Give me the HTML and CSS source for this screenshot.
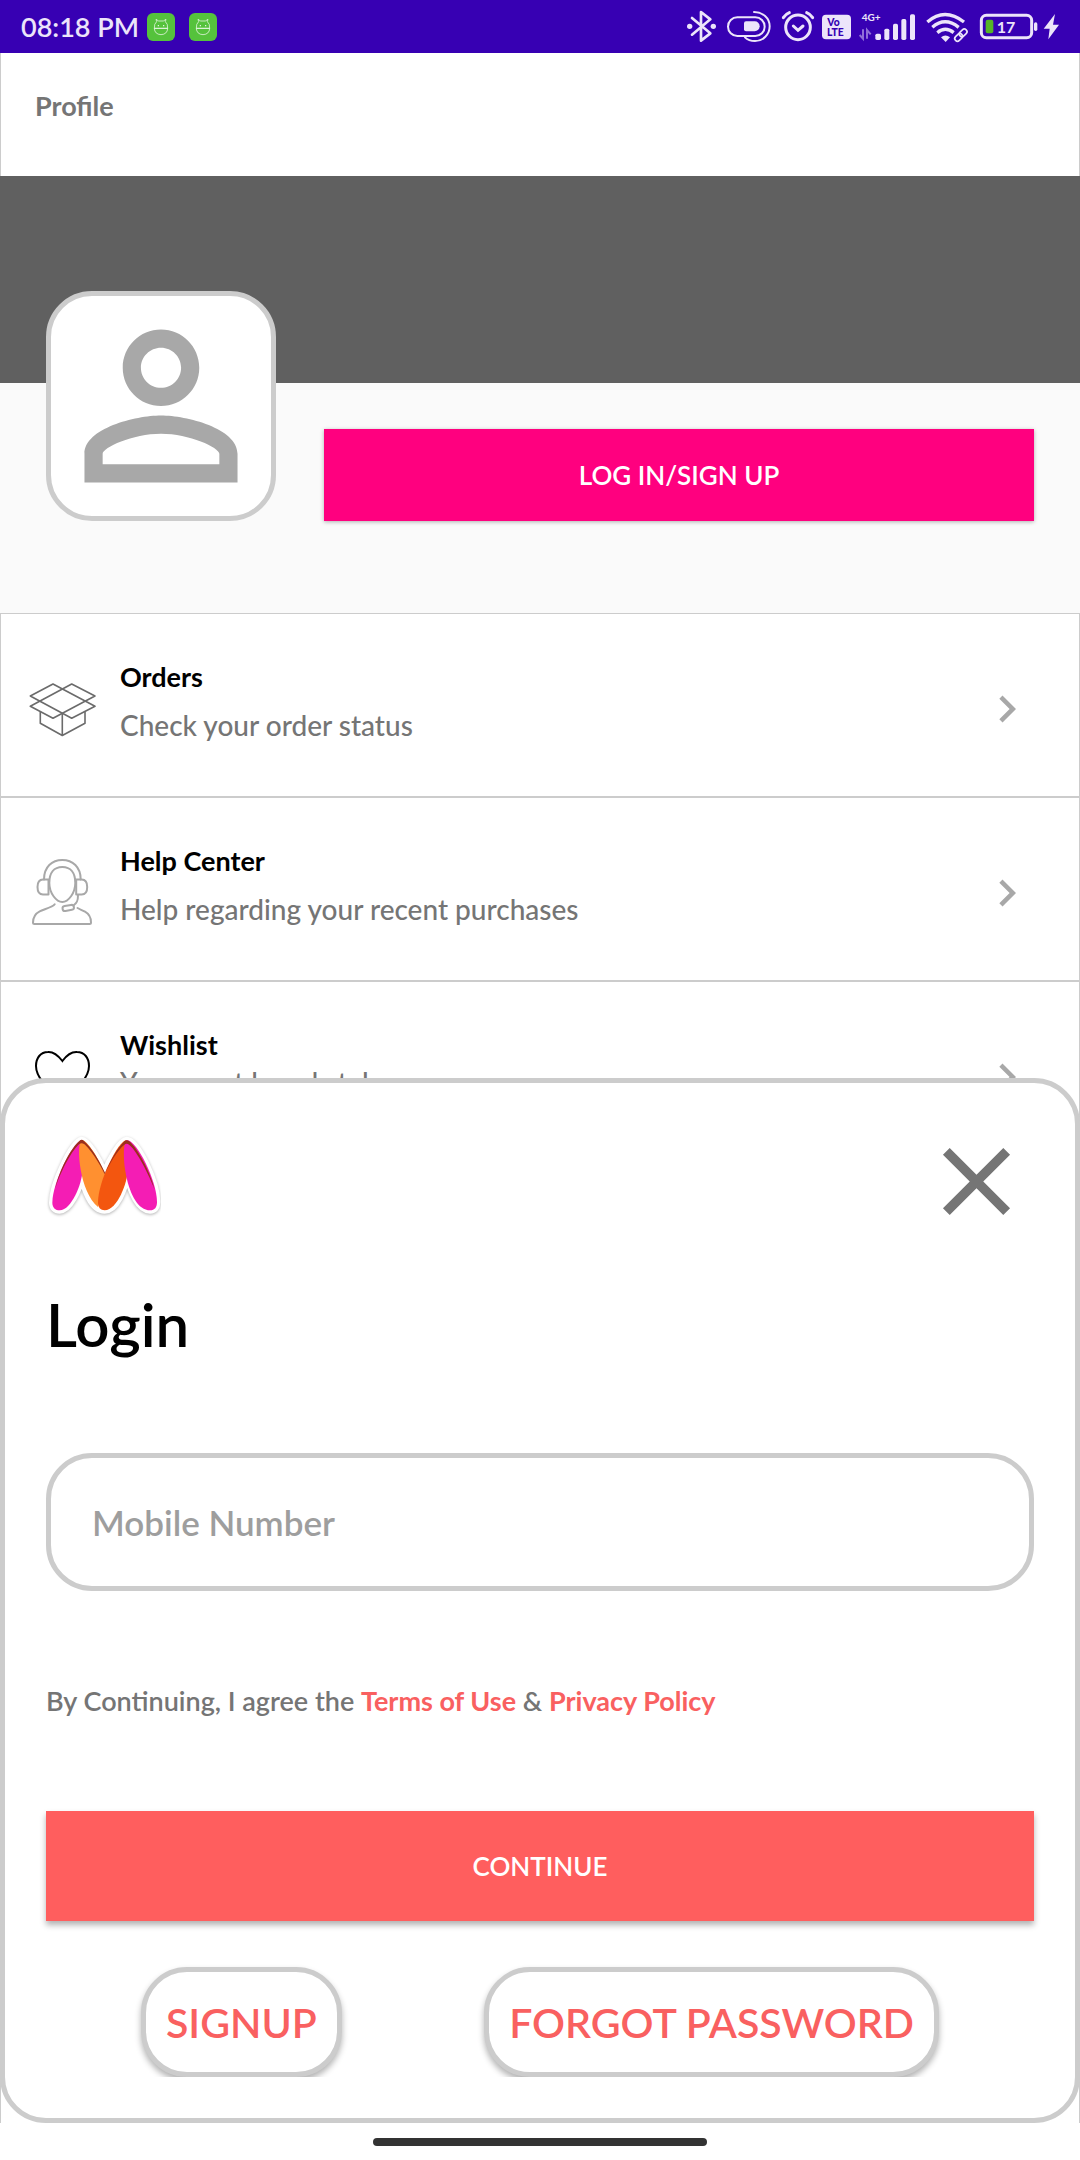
FILE: index.html
```
<!DOCTYPE html>
<html lang="en">
<head>
<meta charset="utf-8">
<meta name="viewport" content="width=device-width, initial-scale=1">
<title>Profile</title>
<link rel="stylesheet" href="styles.css">
</head>
<body>
<div class="statusbar">
  <span class="time">08:18 PM</span>
  <div class="notifications">
    <svg class="notification" viewBox="0 0 84 84" aria-hidden="true"><rect width="84" height="84" rx="18" fill="#55c23c"/><path d="M22 46q-1-14 7-20l-2-7 8 5h14l8-5-2 7q8 6 7 20zM22 46q1 18 20 19 19-1 20-19z" fill="none" stroke="#fff" stroke-width="2"/><circle cx="34" cy="38" r="2" fill="#fff"/><circle cx="50" cy="38" r="2" fill="#fff"/></svg>
    <svg class="notification" viewBox="0 0 84 84" aria-hidden="true"><rect width="84" height="84" rx="18" fill="#55c23c"/><path d="M22 46q-1-14 7-20l-2-7 8 5h14l8-5-2 7q8 6 7 20zM22 46q1 18 20 19 19-1 20-19z" fill="none" stroke="#fff" stroke-width="2"/><circle cx="34" cy="38" r="2" fill="#fff"/><circle cx="50" cy="38" r="2" fill="#fff"/></svg>
  </div>
  <div class="indicators" aria-hidden="true">
    <svg width="36" height="53" viewBox="48 0 108 159"><path d="M66 54l55 46-28 22V36l28 22-55 46" fill="none" stroke="#ece4fa" stroke-width="8" stroke-linejoin="round" stroke-linecap="round"/><circle cx="59" cy="79" r="8" fill="#ece4fa"/><circle cx="130" cy="79" r="8" fill="#ece4fa"/></svg>
    <svg width="55" height="53" viewBox="156 0 165 159"><g fill="none" stroke="#ece4fa" stroke-width="6"><rect x="174" y="52" width="110" height="56" rx="28"/><path d="M252 36c26 0 47 18 47 43s-20 44-44 44c-14 0-23-4-30-11" stroke-linecap="round"/></g><path d="M228 64h26a15 15 0 0 1 0 30h-26q-6 0-6-6V70q0-6 6-6z" fill="#ece4fa"/></svg>
    <svg width="41" height="53" viewBox="321 0 123 159"><g fill="none" stroke="#ece4fa" stroke-width="9" stroke-linecap="round"><circle cx="384" cy="82" r="37"/><path d="M370 78l14 13 15-13"/><path d="M340 53q7-11 18-15M428 53q-7-11-18-15"/></g></svg>
    <svg width="37" height="53" viewBox="444 0 111 159"><rect x="456" y="44" width="87" height="74" rx="12" fill="#ece4fa"/><text x="472" y="77" class="volte">Vo</text><text x="471" y="109" class="volte">LTE</text></svg>
    <svg width="66" height="53" viewBox="555 0 198 159"><text x="575" y="63" class="network">4G+</text><g fill="#ece4fa"><rect x="616" y="101" width="17" height="19" rx="5"/><rect x="643" y="86" width="15" height="34" rx="5"/><rect x="669" y="71" width="15" height="49" rx="5"/><rect x="694" y="57" width="15" height="63" rx="5"/><rect x="720" y="43" width="15" height="77" rx="5"/></g><path d="M579 88v28l-10-11M591 116V90l11 13" fill="none" stroke="#8f6fd8" stroke-width="6"/></svg>
    <svg width="53" height="53" viewBox="753 0 159 159"><g fill="none" stroke="#ece4fa" stroke-width="10"><path d="M772 66Q824 21 882 66"/><path d="M787 82q38-33 79 0"/><path d="M802 98q24-20 49 0"/></g><path d="M813 112q13-11 27 0l-13 14z" fill="#ece4fa"/><g fill="none" stroke="#ece4fa" stroke-width="5" transform="rotate(-45 873 105)"><rect x="850" y="97" width="26" height="16" rx="8"/><rect x="869" y="97" width="26" height="16" rx="8"/></g></svg>
    <svg width="66" height="53" viewBox="912 0 198 159"><rect x="934" y="46" width="151" height="67" rx="15" fill="none" stroke="#ece4fa" stroke-width="9"/><rect x="947" y="59" width="23" height="41" rx="6" fill="#56b527"/><rect x="1092" y="67" width="10" height="26" rx="5" fill="#ece4fa"/><text x="980" y="98" class="battery">17</text></svg>
    <svg width="20" height="53" viewBox="1110 0 60 159"><path d="M1155 42l-34 44h18l-4 32 32-44h-18z" fill="#ece4fa"/></svg>
  </div>
</div>

<main class="screen">
  <header class="topbar"><h1 class="topbar-title">Profile</h1></header>
  <div class="banner"></div>
  <section class="account">
    <div class="avatar">
      <svg viewBox=".5 .5 23 23" aria-hidden="true"><path fill="#a8a8a8" d="M12 5.900c1.160 0 2.100.94 2.100 2.100s-.94 2.100-2.100 2.100S9.900 9.160 9.900 8s.94-2.100 2.100-2.100m0 9c2.970 0 6.100 1.460 6.100 2.100v1.100H5.900V17c0-.64 3.130-2.100 6.100-2.100M12 4C9.790 4 8 5.790 8 8s1.790 4 4 4 4-1.790 4-4-1.790-4-4-4zm0 9c-2.670 0-8 1.340-8 4v3h16v-3c0-2.660-5.330-4-8-4z"/></svg>
    </div>
    <button class="login-button" type="button">LOG IN/SIGN UP</button>
  </section>
  <nav class="menu">
    <a class="item" href="#orders">
      <svg class="item-icon" viewBox="0 0 66 66" aria-hidden="true"><g fill="none" stroke="#6b6b6b" stroke-width="1.600" stroke-linejoin="round"><path d="M1.300 20L24 8l42 22.300-23.300 12L11 25.300z"/><path d="M66 20L42.700 8l-41.400 22.300L24 42.300l32-17z"/><path d="M11.300 35.700v11.600l22 12.200 22.700-12.200V35.700M33.300 37v22.500"/></g></svg>
      <span class="item-text"><span class="item-title">Orders</span><span class="item-note">Check your order status</span></span>
      <svg class="chevron" viewBox="0 0 24 24" aria-hidden="true"><path d="M10 6L8.590 7.410 13.170 12l-4.580 4.590L10 18l6-6z"/></svg>
    </a>
    <a class="item" href="#help">
      <svg class="item-icon" viewBox="0 0 66 66" aria-hidden="true"><g fill="none" stroke="#a8a8a8" stroke-width="2" stroke-linecap="round" stroke-linejoin="round"><path d="M33.300 7C25 7 20.300 13 20.300 23c0 10 7 19 13 19s13-9 13-19c0-10-4.700-16-13-16z"/><path d="M15 19.500C15 7 23 0 33.300 0s18.400 7 18.400 19.500"/><path d="M19.500 19.500H14q-5.500 0-5.500 7.500t5.500 7.500h5.500zM47.200 19.500h5.500q5.500 0 5.500 7.500t-5.500 7.500h-5.500z"/><path d="M49 35c0 6-1 8-4 10"/><rect x="33.500" y="45.500" width="11.500" height="5" rx="2.500" transform="rotate(-10 39 48)"/><path d="M25.700 44.300c-2 3-11 5-15 7C5.500 54 4 58 4 62.500q0 1.500 1.500 1.500h55q1.500 0 1.500-1.500c0-4.500-1-8-6-10.800-3-1.700-5-2.200-7.500-3.700"/></g></svg>
      <span class="item-text"><span class="item-title">Help Center</span><span class="item-note">Help regarding your recent purchases</span></span>
      <svg class="chevron" viewBox="0 0 24 24" aria-hidden="true"><path d="M10 6L8.590 7.410 13.170 12l-4.580 4.590L10 18l6-6z"/></svg>
    </a>
    <a class="item item-compact" href="#wishlist">
      <svg class="item-icon" viewBox="0 0 66 66" aria-hidden="true"><path d="M33.400 17C28 10 23.500 7.700 19 8 11.500 8 7 14 7 22c0 14 17 26 26.400 35C43 48 60 36 60 22c0-8-4.500-14-12-14-4.500-.3-9.500 2-14.600 9z" fill="none" stroke="#000" stroke-width="2"/></svg>
      <span class="item-text"><span class="item-title">Wishlist</span><span class="item-note">Your most loved styles</span></span>
      <svg class="chevron" viewBox="0 0 24 24" aria-hidden="true"><path d="M10 6L8.590 7.410 13.170 12l-4.580 4.590L10 18l6-6z"/></svg>
    </a>
  </nav>

  <form class="sheet">
    <div class="sheet-head">
      <svg class="logo" viewBox="78 12 345 345" aria-hidden="true">
        <path class="logo-outline" d="M185 60C155 70 97 190 97 248c0 15 9 23 22 23 30 0 58-60 67-105 5 38 28 105 68 105 36 0 60-62 68-112 9 60 35 112 68 112 14 0 21-9 21-25 0-62-60-186-91-186-17 0-50 55-67 98-17-43-51-98-68-98z"/>
        <path fill="#f41db4" d="M185 60C155 70 97 190 97 248c0 15 9 23 22 23 36 0 68-84 68-118z"/>
        <path fill="#ff9030" d="M185 60c-18 15-6 155 49 201l30-80-11-24c-17-42-51-97-68-97z"/>
        <path fill="#f3560f" d="M320 60c-26 2-86 125-86 187 0 16 7 24 20 24 38 0 69-85 69-120z"/>
        <path fill="#f41db4" d="M320 60c-22 20-2 211 70 211 14 0 21-9 21-25 0-62-60-186-91-186z"/>
        <path fill="#9a2f1c" d="M178 63q7-7 14 0c22 18 48 62 63 95 16-35 38-75 58-94q7-7 15 0c25 22 62 90 75 142-24-60-58-120-76-132q-7-5-14 0c-20 15-46 60-59 88-15-32-46-79-62-90q-7-5-14 0c-17 14-52 70-72 133 12-55 48-122 72-142z"/>
      </svg>
      <button class="close" type="button" aria-label="Close"><svg viewBox="0 0 24 24" aria-hidden="true"><path fill="#757575" d="M19 6.410L17.590 5 12 10.590 6.410 5 5 6.410 10.590 12 5 17.590 6.410 19 12 13.410 17.590 19 19 17.590 13.410 12z"/></svg></button>
    </div>
    <h2 class="sheet-title">Login</h2>
    <input class="field" type="tel" placeholder="Mobile Number" aria-label="Mobile Number">
    <p class="terms">By Continuing, I agree the <a href="#terms">Terms of Use</a> &amp; <a href="#privacy">Privacy Policy</a></p>
    <button class="continue" type="submit">CONTINUE</button>
    <div class="actions">
      <button class="pill" type="button">SIGNUP</button>
      <button class="pill" type="button">FORGOT PASSWORD</button>
    </div>
  </form>
</main>
<div class="gesture-bar"><span class="handle"></span></div>
</body>
</html>
```
FILE: styles.css
```
* { box-sizing: border-box; }

body {
  margin: 0;
  min-height: 100vh;
  display: flex;
  flex-direction: column;
  background: #fff;
  color: #757575;
  font-family: Lato, "Liberation Sans", sans-serif;
  font-size: 27px;
  font-weight: 600;
  line-height: 33px;
}

button, input { font: inherit; }
button { cursor: pointer; }
svg { display: block; }
h1, h2, p { margin: 0; }

/* System status bar */
.statusbar {
  display: flex;
  align-items: center;
  height: 53px;
  padding: 0 20px 0 21px;
  background: #3700b3;
  color: #ece4fa;
}
.notifications { display: flex; gap: 14px; margin-left: 8px; }
.notification { width: 28px; height: 28px; }
.indicators { display: flex; margin-left: auto; }
.volte { font-size: 31px; font-weight: 900; fill: #3700b3; }
.network { font-size: 30px; font-weight: 700; fill: #ece4fa; }
.battery { font-size: 48px; font-weight: 700; fill: #ece4fa; }

/* Profile screen */
.screen {
  position: relative;
  flex: 1;
  display: flex;
  flex-direction: column;
  overflow: hidden;
  background: #fafafa;
}
.topbar {
  height: 123px;
  padding: 36px 34px 0;
  background: #fff;
  border: 1px solid #ccc;
  border-width: 0 1px;
}
.topbar-title { font-size: 27px; font-weight: 700; line-height: 33px; }
.banner { height: 207px; background: #606060; }
.account {
  display: flex;
  align-items: flex-end;
  gap: 48px;
  margin-top: -92px;
  padding: 0 46px 92px;
}
.avatar {
  width: 230px;
  height: 230px;
  background: #fff;
  border: 5px solid #ccc;
  border-radius: 46px;
}
.login-button {
  flex: 1;
  height: 92px;
  border: 0;
  background: #ff007f;
  color: #fff;
  font-size: 26px;
  box-shadow: 0 1px 4px rgba(0, 0, 0, .3);
}

.menu {
  flex: 1;
  background: #fff;
  border: 1px solid #ccc;
  border-width: 0 1px;
}
.item {
  display: flex;
  align-items: center;
  height: 184px;
  padding: 8px 45px 0 28px;
  border: 1px solid #ccc;
  border-width: 1px 0;
  color: inherit;
  text-decoration: none;
}
.item-icon { width: 66px; height: 66px; overflow: visible; }
.item-text {
  flex: 1;
  align-self: flex-start;
  display: flex;
  flex-direction: column;
  padding: 31px 0 0 25px;
}
.item-title { color: #000; font-weight: 700; line-height: 48px; }
.item-note { font-size: 28px; font-weight: 500; line-height: 48px; }
.item-compact .item-note { line-height: 26px; }
.chevron { width: 54px; height: 54px; fill: #a8a8a8; }

/* Login sheet over the profile screen */
.sheet {
  position: absolute;
  right: 0;
  bottom: 0;
  left: 0;
  display: flex;
  flex-direction: column;
  padding: 41px;
  background: #fff;
  border: 5px solid #ccc;
  border-radius: 46px;
}
.sheet-head { display: flex; justify-content: space-between; }
.logo { width: 115px; height: 115px; }
.logo-outline {
  fill: #fff;
  stroke: #fff;
  stroke-width: 20px;
  stroke-linejoin: round;
  filter: drop-shadow(0 3px 5px rgba(0, 0, 0, .3));
}
.close {
  width: 115px;
  height: 115px;
  padding: 0;
  border: 0;
  background: none;
}
.sheet-title {
  margin-top: 49px;
  color: #000;
  font-size: 60px;
  font-weight: 600;
  line-height: 72px;
}
.field {
  width: 100%;
  height: 138px;
  margin-top: 93px;
  padding: 0 41px;
  border: 5px solid #ccc;
  border-radius: 46px;
  background: #fff;
  color: #000;
  font-size: 35px;
}
.field::placeholder { color: #9e9e9e; opacity: 1; }
.terms { margin-top: 93px; }
.terms a { color: #f96060; font-weight: 700; text-decoration: none; }
.continue {
  height: 110px;
  margin-top: 94px;
  border: 0;
  background: #ff5e5e;
  color: #fff;
  font-size: 26px;
  box-shadow: 0 4px 6px rgba(0, 0, 0, .3);
}
.actions {
  display: flex;
  justify-content: space-between;
  margin-top: 41px;
  padding: 5px 95px 0;
  overflow: hidden;
}
.pill {
  height: 110px;
  padding: 0 20px;
  border: 5px solid #ccc;
  border-radius: 46px;
  background: #fff;
  color: #f96060;
  font-size: 41px;
  box-shadow: 0 4px 6px rgba(0, 0, 0, .3);
}

/* System gesture bar */
.gesture-bar {
  display: flex;
  justify-content: center;
  height: 37px;
  padding-top: 15px;
}
.handle {
  width: 334px;
  height: 8px;
  border-radius: 4px;
  background: #333;
}
```
